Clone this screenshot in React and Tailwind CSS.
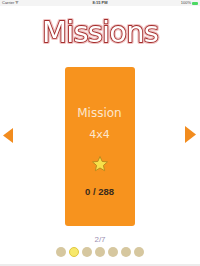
export default function App() {
  const dots = [0, 1, 2, 3, 4, 5, 6]

  return (
    <div className="w-[200px] h-[266px] bg-white flex flex-col overflow-hidden font-['DejaVu_Sans',sans-serif]">
      {/* status bar */}
      <div className="h-[6px] bg-[#f4f4f4] flex items-center justify-between px-[2px] text-[4px] leading-none text-[#444] font-['Liberation_Sans',sans-serif]">
        <span>Carrier ᯤ</span>
        <span className="font-bold">8:15 PM</span>
        <span className="flex items-center gap-[1px]">
          100%
          <span className="w-[6px] h-[3px] bg-[#4cd964] rounded-[1px]" />
        </span>
      </div>

      {/* title */}
      <div className="h-[50px] flex items-center justify-center">
        <svg width="124" height="34" viewBox="0 0 124 34" className="[will-change:transform]">
          <text
            x="62"
            y="28"
            textAnchor="middle"
            fontFamily="DejaVu Sans, sans-serif"
            fontSize="29"
            letterSpacing="-0.8"
            fill="#ffffff"
            stroke="#efc2c2"
            strokeWidth="4.2"
            strokeLinejoin="round"
          >
            Missions
          </text>
          <text
            x="62"
            y="28"
            textAnchor="middle"
            fontFamily="DejaVu Sans, sans-serif"
            fontSize="29"
            letterSpacing="-0.8"
            fill="#ffffff"
            stroke="#a32d2c"
            strokeWidth="1.8"
            strokeLinejoin="round"
            paintOrder="stroke fill"
          >
            Missions
          </text>
        </svg>
      </div>

      {/* carousel */}
      <div className="flex items-start justify-between mt-[11px]">
        <div className="pl-[3px] pt-[61px]">
          <svg width="11" height="15" viewBox="0 0 11 15">
            <polygon points="10,0 10,15 0,7.5" fill="#f28c1e" />
          </svg>
        </div>

        <div className="w-[70px] h-[159px] bg-[#f7931e] rounded-[3px] flex flex-col items-center pt-[40px]">
          <span className="text-[12px] leading-none text-[#fce6cc]">Mission</span>
          <span className="text-[11px] leading-none text-[#fce6cc] mt-[10px]">4x4</span>
          <svg width="18" height="18" viewBox="0 0 24 24" className="mt-[15px]">
            <polygon
              points="12,2 14.9,8.6 22,9.2 16.6,13.9 18.2,21 12,17.3 5.8,21 7.4,13.9 2,9.2 9.1,8.6"
              fill="#f7e04a"
              stroke="#b98a1e"
              strokeWidth="1.3"
              strokeLinejoin="round"
            />
          </svg>
          <span className="text-[9.5px] leading-none font-bold text-[#3a2b1c] mt-[14px] font-['Liberation_Sans',sans-serif]">
            0 / 288
          </span>
        </div>

        <div className="pr-[4px] pt-[59px]">
          <svg width="11" height="17" viewBox="0 0 11 17">
            <polygon points="0,0 0,17 11,8.5" fill="#f28c1e" />
          </svg>
        </div>
      </div>

      {/* page indicator */}
      <div className="flex flex-col items-center mt-[10px]">
        <span className="text-[8px] leading-none text-[#9d8fb3] font-['Liberation_Sans',sans-serif]">2/7</span>
        <div className="flex gap-[3px] mt-[3px]">
          {dots.map((i) =>
            i === 1 ? (
              <span key={i} className="w-[10px] h-[10px] rounded-full bg-[#f7e86b] border border-[#e0c840]" />
            ) : (
              <span key={i} className="w-[10px] h-[10px] rounded-full bg-[#d6c79f]" />
            )
          )}
        </div>
      </div>
      <div className="flex-1" />
      <div className="h-[2px] bg-[#ececec]" />
    </div>
  )
}
